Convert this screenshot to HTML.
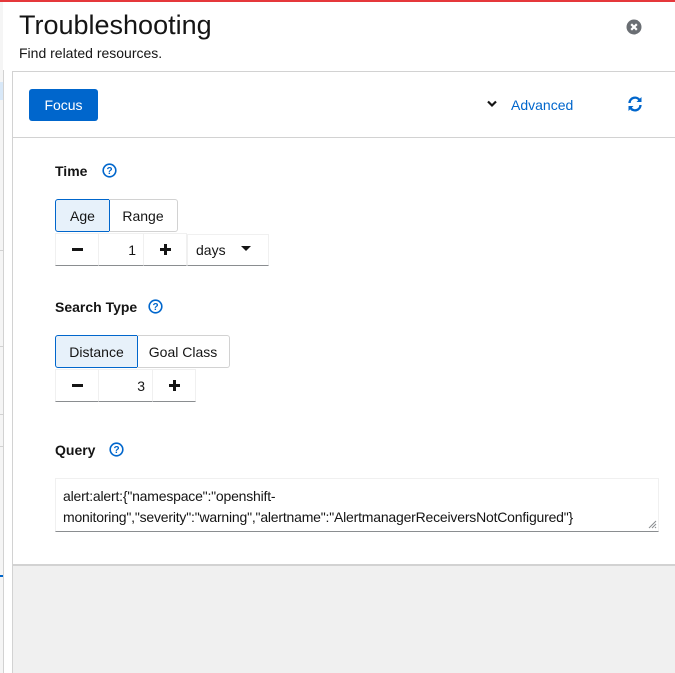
<!DOCTYPE html><html><head><style>
*{box-sizing:border-box;margin:0;padding:0}
body{width:675px;height:673px;position:relative;overflow:hidden;background:#fff;font-family:"Liberation Sans",sans-serif;color:#151515;font-size:14px}
.a{position:absolute}
.lbl{font-weight:bold;font-size:14px}
.tg{border:1px solid #d2d2d2;display:flex;align-items:center;justify-content:center;font-size:14px;color:#151515}
.tg.on{background:#e7f1fa;border-color:#0066cc}
.nb{border:1px solid #f0f0f0;border-bottom:1px solid #8a8d90;display:flex;align-items:center;justify-content:center;font-size:16px;font-weight:bold}
.mi{width:11px;height:3px;background:#151515}
.pl{position:relative;width:11px;height:11px}
.pl:before{content:"";position:absolute;left:0;top:4px;width:11px;height:3px;background:#151515}
.pl:after{content:"";position:absolute;left:4px;top:0;width:3px;height:11px;background:#151515}
</style></head><body>
<div class="a" style="left:0;top:0;width:675px;height:2px;background:#e5383b"></div>
<div class="a" style="left:0;top:2px;width:3px;height:671px;background:#f5f5f5"></div>
<div class="a" style="left:0;top:82px;width:3px;height:18px;background:#d8e8f8"></div>
<div class="a" style="left:3px;top:70px;width:1px;height:603px;background:#d2d2d2"></div>
<div class="a" style="left:12px;top:71px;width:1px;height:602px;background:#d2d2d2"></div>
<div class="a" style="left:0;top:250px;width:3px;height:1px;background:#d2d2d2"></div>
<div class="a" style="left:0;top:346px;width:3px;height:1px;background:#d2d2d2"></div>
<div class="a" style="left:0;top:414px;width:3px;height:1px;background:#d2d2d2"></div>
<div class="a" style="left:0;top:446px;width:3px;height:1px;background:#d2d2d2"></div>
<div class="a" style="left:0;top:575px;width:3px;height:2px;background:#0066cc"></div>
<div class="a" style="left:4px;top:2px;width:671px;height:69px;background:#fff"></div>
<div class="a" style="left:19px;top:10px;font-size:27px;color:#151515">Troubleshooting</div>
<div class="a" style="left:19px;top:45px;font-size:14px">Find related resources.</div>
<svg class="a" style="left:626px;top:19px" width="16" height="16" viewBox="0 0 16 16"><circle cx="8" cy="8" r="7.5" fill="#6a6e73"/><path d="M5.2 5.2L10.8 10.8M10.8 5.2L5.2 10.8" stroke="#fff" stroke-width="2.2"/></svg>
<div class="a" style="left:12px;top:71px;width:663px;height:1px;background:#d2d2d2"></div>
<div class="a" style="left:29px;top:89px;width:69px;height:32px;background:#0066cc;border-radius:3px;color:#fff;display:flex;align-items:center;justify-content:center">Focus</div>
<svg class="a" style="left:487px;top:100px" width="10" height="8" viewBox="0 0 10 8"><path d="M1 1.5L5 5.5L9 1.5" stroke="#151515" stroke-width="2.2" fill="none"/></svg>
<div class="a" style="left:511px;top:97px;color:#0066cc;font-size:14px">Advanced</div>
<svg class="a" style="left:627px;top:96px" width="16" height="16" viewBox="0 0 16 16"><path d="M2.5 7A5.5 5.5 0 0 1 12.5 4" stroke="#0066cc" stroke-width="2.4" fill="none"/><path d="M14.5 1V6H9.5Z" fill="#0066cc"/><path d="M13.5 9A5.5 5.5 0 0 1 3.5 12" stroke="#0066cc" stroke-width="2.4" fill="none"/><path d="M1.5 15V10H6.5Z" fill="#0066cc"/></svg>
<div class="a" style="left:12px;top:137px;width:663px;height:1px;background:#d2d2d2"></div>
<div class="a lbl" style="left:55px;top:163px">Time</div>
<svg class="a" style="left:102px;top:163px" width="15" height="15" viewBox="0 0 15 15"><circle cx="7.5" cy="7.5" r="6.3" stroke="#0066cc" stroke-width="1.6" fill="none"/><text x="7.5" y="11.2" font-size="10" font-weight="bold" fill="#0066cc" text-anchor="middle" font-family="Liberation Sans">?</text></svg>
<div class="a tg on" style="left:55px;top:199px;width:55px;height:33px;border-radius:3px 0 0 3px">Age</div>
<div class="a tg" style="left:109px;top:199px;width:69px;height:33px;border-left:none;border-radius:0 3px 3px 0">Range</div>
<div class="a nb" style="left:55px;top:233px;width:44px;height:33px"><div class="mi"></div></div>
<div class="a nb" style="left:98px;top:233px;width:46px;height:33px;justify-content:flex-end;padding-right:7px;font-weight:normal;font-size:14px">1</div>
<div class="a nb" style="left:143px;top:233px;width:44px;height:33px"><div class="pl"></div></div>
<div class="a nb" style="left:187px;top:234px;width:82px;height:32px;justify-content:flex-start;padding-left:8px;font-weight:normal;font-size:14px">days</div>
<svg class="a" style="left:241px;top:246px" width="10" height="6"><path d="M0 0H10L5 5Z" fill="#151515"/></svg>
<div class="a lbl" style="left:55px;top:299px">Search Type</div>
<svg class="a" style="left:148px;top:299px" width="15" height="15" viewBox="0 0 15 15"><circle cx="7.5" cy="7.5" r="6.3" stroke="#0066cc" stroke-width="1.6" fill="none"/><text x="7.5" y="11.2" font-size="10" font-weight="bold" fill="#0066cc" text-anchor="middle" font-family="Liberation Sans">?</text></svg>
<div class="a tg on" style="left:55px;top:335px;width:83px;height:33px;border-radius:3px 0 0 3px">Distance</div>
<div class="a tg" style="left:137px;top:335px;width:93px;height:33px;border-left:none;border-radius:0 3px 3px 0">Goal Class</div>
<div class="a nb" style="left:55px;top:369px;width:44px;height:33px"><div class="mi"></div></div>
<div class="a nb" style="left:98px;top:369px;width:55px;height:33px;justify-content:flex-end;padding-right:7px;font-weight:normal;font-size:14px">3</div>
<div class="a nb" style="left:152px;top:369px;width:44px;height:33px"><div class="pl"></div></div>
<div class="a lbl" style="left:55px;top:442px">Query</div>
<svg class="a" style="left:109px;top:442px" width="15" height="15" viewBox="0 0 15 15"><circle cx="7.5" cy="7.5" r="6.3" stroke="#0066cc" stroke-width="1.6" fill="none"/><text x="7.5" y="11.2" font-size="10" font-weight="bold" fill="#0066cc" text-anchor="middle" font-family="Liberation Sans">?</text></svg>
<div class="a" style="left:55px;top:478px;width:604px;height:54px;border:1px solid #f0f0f0;border-bottom:1px solid #8a8d90;padding:7px 7px;font-size:14px;line-height:21px;letter-spacing:-0.2px">alert:alert:{"namespace":"openshift-<br>monitoring","severity":"warning","alertname":"AlertmanagerReceiversNotConfigured"}</div>
<svg class="a" style="left:648px;top:520px" width="9" height="9"><path d="M8 1L1 8M8 4L4 8M8 7L7 8" stroke="#8a8d90" stroke-width="1"/></svg>
<div class="a" style="left:13px;top:564px;width:662px;height:109px;background:#f0f0f0;border-top:2px solid #d2d2d2"></div>
</body></html>
